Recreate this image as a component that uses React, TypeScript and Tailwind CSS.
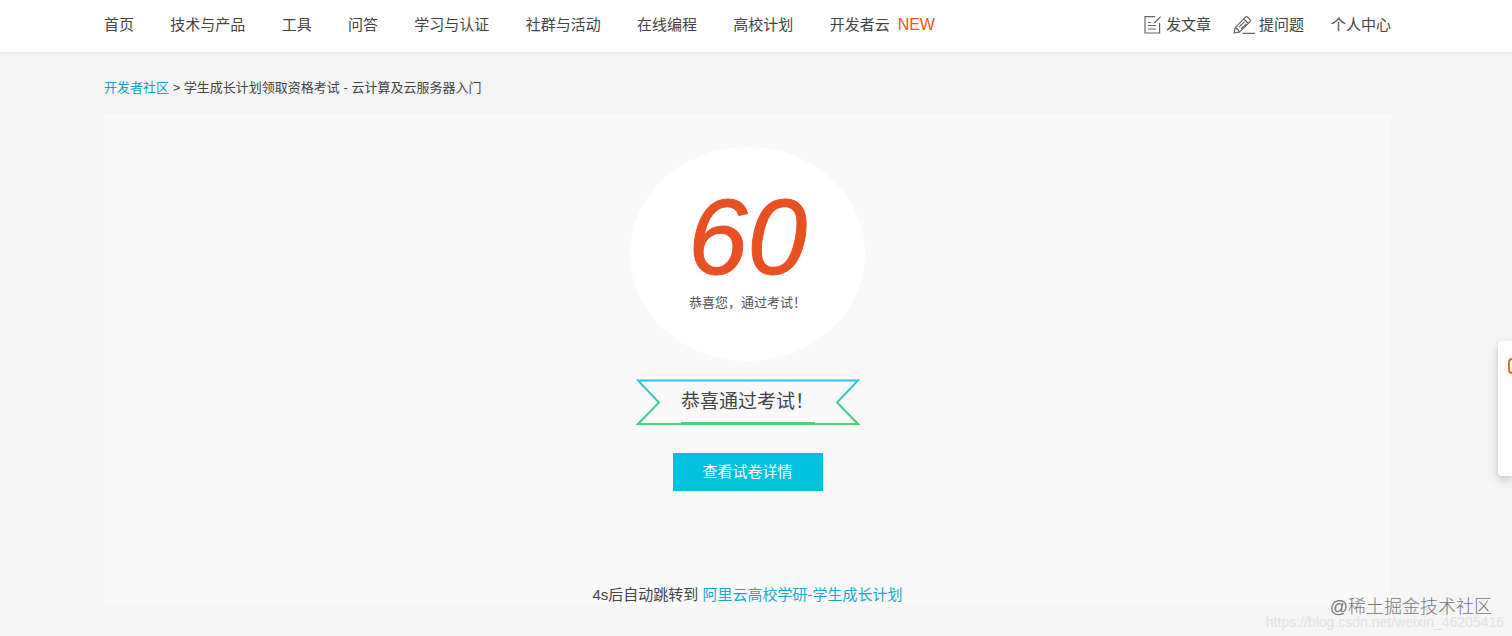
const navItems = ["首页", "技术与产品", "工具", "问答", "学习与认证", "社群与活动", "在线编程", "高校计划"];

function ArticleIcon() {
  return (
    <svg className="h-5 w-[18px]" viewBox="0 0 18 20" fill="none" stroke="#666" strokeWidth="1.2" aria-hidden="true">
      <path d="M11 1.6H1V18H15.6V8" />
      <path d="M16.6 1.6 10.4 8" />
      <path d="M4 7.5h3M4 10.5h8M4 14h8" />
    </svg>
  );
}

function PencilIcon() {
  return (
    <svg className="h-5 w-[22px]" viewBox="0 0 22 20" fill="none" stroke="#666" strokeWidth="1.2" strokeLinejoin="round" aria-hidden="true">
      <path d="M1 18 2 12.8 12.4 2.2Q13.6 1.2 14.8 2.2L17 4.5Q18 5.5 17 6.7L6.4 17.1Z" />
      <path d="M10.8 4 15.2 8.3M2 12.8Q5 13.5 6.4 17.1M6 12.2 11.3 6.8M8 14.2 13.3 8.8M9.5 18.4H22" />
    </svg>
  );
}

function Header() {
  return (
    <header className="border-b border-[#e8e8e8] bg-white pr-[17px] shadow-[0_1px_2px_rgba(0,0,0,0.04)]">
      <div className="mx-auto flex h-[52px] max-w-[1287px] items-center justify-between pb-0.5 text-[15px] whitespace-nowrap text-[#444]">
        <nav className="flex w-[831px] items-center justify-between">
          {navItems.map((item) => (
            <a key={item} href="#">{item}</a>
          ))}
          <a href="#" className="flex items-center gap-2">
            开发者云<span className="text-base leading-5 text-[#f0541e]">NEW</span>
          </a>
        </nav>
        <div className="flex items-center">
          <a href="#" className="mr-[22px] flex items-center gap-1"><ArticleIcon />发文章</a>
          <a href="#" className="mr-[27px] flex items-center gap-1"><PencilIcon />提问题</a>
          <a href="#">个人中心</a>
        </div>
      </div>
    </header>
  );
}

function Ribbon() {
  return (
    <div className="relative flex h-[46px] w-56 justify-center">
      <svg className="absolute inset-0 h-full w-full" viewBox="0 0 224 46" fill="none" aria-hidden="true">
        <defs>
          <linearGradient id="ribbon" gradientUnits="userSpaceOnUse" x1="0" y1="0" x2="0" y2="46">
            <stop offset="0" stopColor="#2cc3e6" />
            <stop offset="1" stopColor="#50d070" />
          </linearGradient>
        </defs>
        <path d="M2 1.5H222L201 23.5 222 45H2L23 23.5Z" stroke="url(#ribbon)" strokeWidth="2" />
        <path d="M45 43.5H179" stroke="#50d080" />
      </svg>
      <h2 className="relative text-[19px] leading-[46px] font-normal text-[#444]">恭喜通过考试！</h2>
    </div>
  );
}

export default function App() {
  return (
    <div className="relative min-h-screen overflow-hidden bg-[#f5f5f5] font-['Liberation_Sans','Noto_Sans_CJK_SC',sans-serif]">
      <Header />
      <main className="pr-[17px]">
        <div className="mx-auto max-w-[1287px]">
          <nav className="pt-[25px] text-[13px] leading-5 text-[#444]">
            <a href="#" className="text-[#1a9fc4]">开发者社区</a> &gt; 学生成长计划领取资格考试 - 云计算及云服务器入门
          </nav>
          <section className="mt-4 flex flex-col items-center bg-[#f9f9f9] pt-[33px]">
            <div className="flex h-[214px] w-[235px] flex-col items-center rounded-[50%] bg-white pt-[36px]">
              <strong className="text-[107px] leading-[108px] font-normal text-[#e85021] italic [-webkit-text-stroke:1px_#e85021]">60</strong>
              <p className="text-[13px] leading-6 text-[#555]">恭喜您，通过考试！</p>
            </div>
            <div className="mt-[18px]"><Ribbon /></div>
            <button className="mt-7 h-[38px] w-[150px] bg-[#00c1de] text-[15px] text-white">查看试卷详情</button>
            <p className="mt-[92px] text-[15px] leading-6 text-[#444]">
              4s后自动跳转到 <a href="#" className="text-[#1ba9c9]">阿里云高校学研-学生成长计划</a>
            </p>
          </section>
        </div>
      </main>
      <aside className="absolute top-[341px] right-0 flex h-[135px] w-3.5 justify-end rounded-l-sm bg-white pt-[17px] shadow-[0_4px_10px_rgba(0,0,0,0.2)]">
        <span className="h-4 w-1 rounded-l-sm border-2 border-r-0 border-[#f26a1b]" />
      </aside>
      <div className="absolute right-0 bottom-0 h-10 w-60 text-right whitespace-nowrap">
        <p className="absolute right-2 bottom-1 text-sm text-[#e2e2e2]">https://blog.csdn.net/weixin_46205416</p>
        <p className="absolute right-5 bottom-[15px] text-[18px] leading-7 font-light text-[#777]">@稀土掘金技术社区</p>
      </div>
    </div>
  );
}
